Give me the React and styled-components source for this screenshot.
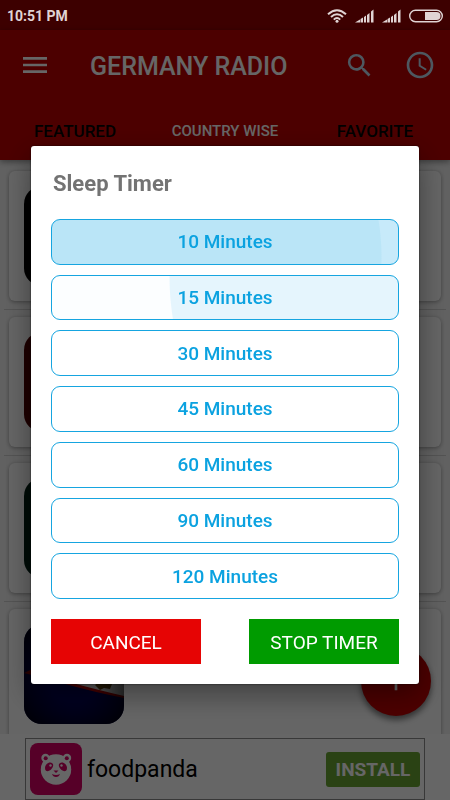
import styled, { createGlobalStyle } from "styled-components";
import { MdAccessTime, MdAdd, MdMenu, MdSearch } from "react-icons/md";

const GlobalStyle = createGlobalStyle`
  * {
    box-sizing: border-box;
  }

  body {
    margin: 0;
    font-family: Roboto, "Liberation Sans", sans-serif;
    background-color: #666;
  }

  button {
    font-family: inherit;
    border: none;
    padding: 0;
    cursor: pointer;
  }
`;

const Container = styled.div`
  height: 100vh;
  display: flex;
  flex-direction: column;
  overflow: hidden;
  background-color: white;
`;

const StatusBar = styled.div`
  height: 30px;
  flex-shrink: 0;
  padding: 1px 7px 0;
  display: flex;
  align-items: center;
  justify-content: space-between;
  background-color: #3d0000;
  color: #e0d4d4;
`;

const Time = styled.span`
  font-size: 14px;
  font-weight: 700;
`;

const StatusIcons = styled.div`
  display: flex;
  align-items: center;
  gap: 8px;
`;

const Header = styled.header`
  flex-shrink: 0;
  background-color: #be0000;
  color: white;
  box-shadow: 0 2px 6px rgba(0, 0, 0, 0.4);
  z-index: 1;
`;

const Toolbar = styled.div`
  height: 70px;
  padding: 0 14px 0 19px;
  display: flex;
  align-items: center;
`;

const Title = styled.h1`
  flex: 1;
  margin: 4px 0 0 39px;
  font-size: 25px;
  font-weight: 500;
  line-height: 30px;
`;

const IconButton = styled.button`
  height: 32px;
  display: flex;
  align-items: center;
  background-color: transparent;
  color: ${(props) => props.color};
`;

const Actions = styled.div`
  display: flex;
  gap: 29px;
`;

const Tabs = styled.nav`
  height: 60px;
  padding-top: 2px;
  display: grid;
  grid-template-columns: repeat(3, 1fr);
`;

const Tab = styled.button`
  background-color: transparent;
  color: ${(props) => (props.$active ? "white" : "black")};
  font-size: ${(props) => (props.$active ? "15px" : "17px")};
  font-weight: 500;
`;

const Content = styled.main`
  flex: 1;
  min-height: 0;
  position: relative;
  overflow: hidden;
  background-color: #f3f3f3;
`;

const List = styled.ul`
  margin: 0;
  padding: 4px 4px 0;
  list-style: none;
`;

const Row = styled.li`
  padding: 7px 5px 8px;
  border-bottom: 1px solid #d0d0d0;
`;

const Card = styled.div`
  padding: 15px;
  border-radius: 6px;
  background-color: #fdfdfd;
  box-shadow: 0 1px 4px rgba(0, 0, 0, 0.35);
`;

const Flag = styled.div`
  width: 100px;
  height: 100px;
  border-radius: 18px;
  overflow: hidden;
  background-color: ${(props) => props.$bg};
`;

const Fab = styled.button`
  position: absolute;
  right: 19px;
  bottom: 18px;
  width: 70px;
  height: 70px;
  border-radius: 50%;
  display: flex;
  align-items: center;
  justify-content: center;
  background-color: #be0000;
  color: white;
  box-shadow: 0 4px 6px rgba(0, 0, 0, 0.5);
`;

const AdBar = styled.aside`
  flex-shrink: 0;
  padding: 4px 25px 0;
`;

const Ad = styled.div`
  height: 62px;
  padding: 0 4px;
  display: flex;
  align-items: center;
  border: 1px solid #8c8c8c;
`;

const AdName = styled.span`
  flex: 1;
  margin-left: 5px;
  font-size: 23px;
  color: black;
`;

const Install = styled.button`
  width: 94px;
  height: 35px;
  border-radius: 3px;
  background-color: #69a532;
  color: white;
  font-size: 19px;
  font-weight: 700;
`;

const Overlay = styled.div`
  position: fixed;
  inset: 30px 0 0;
  z-index: 2;
  display: flex;
  align-items: center;
  justify-content: center;
  background-color: rgba(0, 0, 0, 0.6);
`;

const Dialog = styled.section`
  width: 100%;
  max-width: 560px;
  margin: 0 31px;
  padding: 20px;
  border-radius: 3px;
  background-color: white;
  box-shadow: 0 10px 28px rgba(0, 0, 0, 0.4), 0 0 2px rgba(0, 0, 0, 0.8);
`;

const DialogTitle = styled.h2`
  margin: 4px 0 21px 2px;
  font-size: 22px;
  font-weight: 700;
  line-height: 28px;
  color: #737373;
`;

const Options = styled.div`
  min-height: 380px;
  display: grid;
  gap: 10px;
`;

const Option = styled.button`
  border: 1px solid #16a5e0;
  border-radius: 9px;
  background: ${(props) => props.$fill || "white"};
  color: #0ba2e0;
  font-size: 19px;
  font-weight: 500;
`;

const Buttons = styled.div`
  margin-top: 20px;
  display: flex;
  justify-content: space-between;
`;

const Button = styled.button`
  width: 150px;
  height: 45px;
  padding-top: 2px;
  background-color: ${(props) => props.$bg};
  color: white;
  font-size: 19px;
`;

const options = [
  {
    minutes: 10,
    fill: "radial-gradient(circle at 101px 37px, #bae5f7 228px, #c7eafa 229px)",
  },
  {
    minutes: 15,
    fill: "radial-gradient(circle at 387px 0, #e5f5fd 269px, #fcfeff 270px)",
  },
  { minutes: 30 },
  { minutes: 45 },
  { minutes: 60 },
  { minutes: 90 },
  { minutes: 120 },
];

const flags = ["#000000", "#4a0000", "#001f14"];

const Wifi = () => (
  <svg width="20" height="14" viewBox="0 0 20 14" fill="none" stroke="currentColor" strokeWidth="2">
    <path d="M1 5.2Q10-2.8 19 5.2" />
    <path d="M4 8Q10 2.4 16 8" />
    <path d="M6.8 10.6Q10 7.4 13.2 10.6" />
    <circle cx="10" cy="12.2" r="1.5" fill="currentColor" stroke="none" />
  </svg>
);

const Signal = () => (
  <svg width="19" height="14" viewBox="0 0 19 14" fill="currentColor">
    <path d="M0 13.500L5 10.500V13.500ZM5.500 13.500V10L8 8.500V13.500ZM9 13.500V8L11 6.500V13.500ZM12 13.500V6L14.500 4V13.500ZM16 13.500V2.500L18.500 0.500V13.500Z" />
  </svg>
);

const Battery = () => (
  <svg width="34" height="14" viewBox="0 0 34 14">
    <rect x="0.7" y="1.2" width="32.6" height="11.6" rx="5.8" fill="none" stroke="currentColor" strokeWidth="1.4" />
    <path d="M16 3H27.5A4 4 0 0 1 27.5 11H16Z" fill="currentColor" />
  </svg>
);

const SamoaFlag = () => (
  <svg width="100" height="100" viewBox="0 0 100 100">
    <defs>
      <radialGradient id="shade" cx="50%" cy="50%" r="70%">
        <stop offset="0.4" stopColor="#000" stopOpacity="0" />
        <stop offset="1" stopColor="#000" stopOpacity="0.9" />
      </radialGradient>
    </defs>
    <rect width="100" height="100" fill="#000050" />
    <path d="M0 49L100 0V74Q70 68 45 61Q20 54 0 49Z" fill="#b00000" />
    <path d="M12 50L100 7V72Q70 65 45 58Z" fill="#ddd" />
    <path d="M71 61L78 56L88 60L86 65L80 64L76 66Z" fill="#5b4210" />
    <rect width="100" height="100" fill="url(#shade)" />
  </svg>
);

const Panda = () => (
  <svg width="52" height="52" viewBox="0 0 52 52">
    <rect width="52" height="52" rx="8" fill="#d70064" />
    <g fill="#fff">
      <circle cx="15.5" cy="15" r="4.2" />
      <circle cx="37" cy="15" r="4.2" />
      <circle cx="26" cy="26.5" r="15.2" />
    </g>
    <g fill="#d70064">
      <circle cx="15.7" cy="15.2" r="2" />
      <circle cx="36.8" cy="15.2" r="2" />
      <path d="M22.500 20.500C24 22 23 24.500 20.500 27C18 29 15 28.500 15 25C15.200 21 19.500 18 22.500 20.500Z" />
      <path d="M29.500 20.500C28 22 29 24.500 31.500 27C34 29 37 28.500 37 25C36.800 21 32.500 18 29.500 20.500Z" />
      <path d="M23.500 27.500H28.500L26 30Z" />
      <path d="M22 31Q26 33 30 31Q29 34 26 34Q23 34 22 31Z" />
    </g>
    <circle cx="20.500" cy="22.500" r="1.200" fill="#fff" />
    <circle cx="31.500" cy="22.500" r="1.200" fill="#fff" />
  </svg>
);

const App = () => {
  return (
    <Container>
      <GlobalStyle />
      <StatusBar>
        <Time>10:51 PM</Time>
        <StatusIcons>
          <Wifi />
          <Signal />
          <Signal />
          <Battery />
        </StatusIcons>
      </StatusBar>
      <Header>
        <Toolbar>
          <IconButton color="white" aria-label="Menu">
            <MdMenu size={32} />
          </IconButton>
          <Title>GERMANY RADIO</Title>
          <Actions>
            <IconButton color="#c0dcf0" aria-label="Search">
              <MdSearch size={31} />
            </IconButton>
            <IconButton color="#c0dcf0" aria-label="Sleep timer">
              <MdAccessTime size={32} />
            </IconButton>
          </Actions>
        </Toolbar>
        <Tabs>
          <Tab>FEATURED</Tab>
          <Tab $active>COUNTRY WISE</Tab>
          <Tab>FAVORITE</Tab>
        </Tabs>
      </Header>
      <Content>
        <List>
          {flags.map((bg) => (
            <Row key={bg}>
              <Card>
                <Flag $bg={bg} />
              </Card>
            </Row>
          ))}
          <Row>
            <Card>
              <Flag>
                <SamoaFlag />
              </Flag>
            </Card>
          </Row>
        </List>
        <Fab aria-label="Add">
          <MdAdd size={32} />
        </Fab>
      </Content>
      <AdBar>
        <Ad>
          <Panda />
          <AdName>foodpanda</AdName>
          <Install>INSTALL</Install>
        </Ad>
      </AdBar>
      <Overlay>
        <Dialog role="dialog" aria-labelledby="dialog-title">
          <DialogTitle id="dialog-title">Sleep Timer</DialogTitle>
          <Options>
            {options.map((item) => (
              <Option key={item.minutes} $fill={item.fill}>
                {item.minutes} Minutes
              </Option>
            ))}
          </Options>
          <Buttons>
            <Button $bg="#e60404">CANCEL</Button>
            <Button $bg="#009b00">STOP TIMER</Button>
          </Buttons>
        </Dialog>
      </Overlay>
    </Container>
  );
};

export default App;
